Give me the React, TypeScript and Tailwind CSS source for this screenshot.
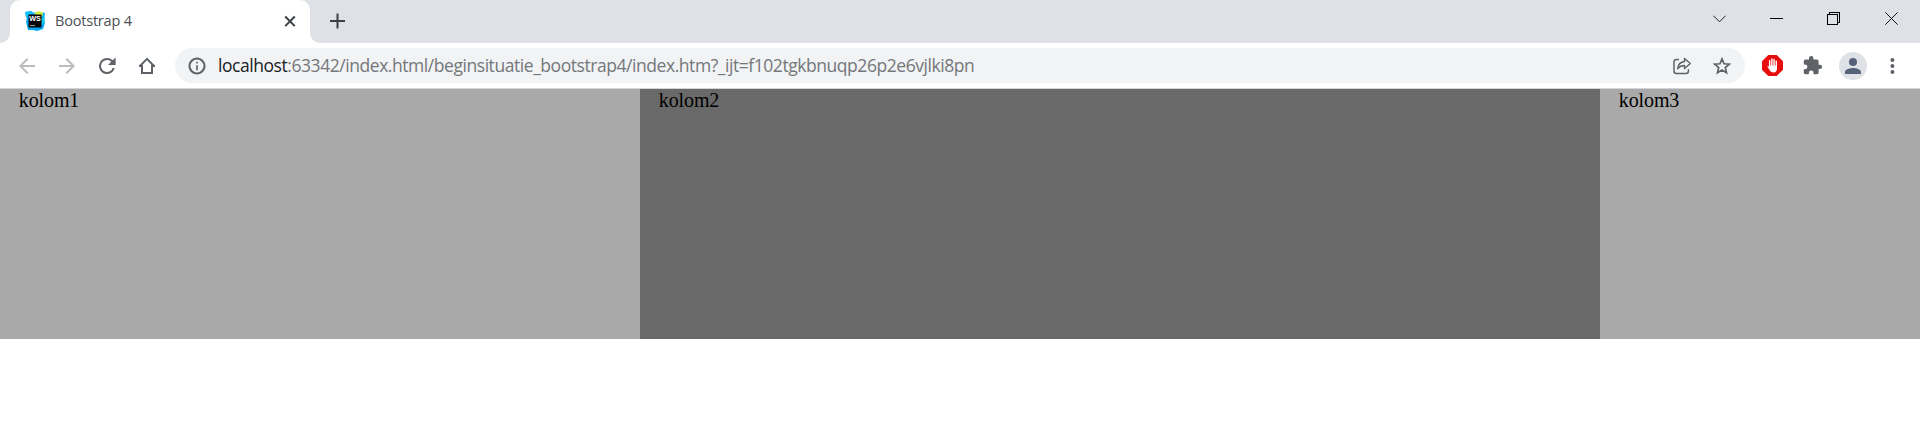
import type { ReactNode } from "react";

function ToolButton({ label, children }: { label: string; children: ReactNode }) {
  return (
    <button aria-label={label} className="flex h-[35px] w-10 shrink-0 items-center justify-center text-[#5f6368]">
      {children}
    </button>
  );
}

function Icon({ d, className = "size-6" }: { d: string; className?: string }) {
  return (
    <svg viewBox="0 0 24 24" className={className} fill="currentColor">
      <path d={d} />
    </svg>
  );
}

function WebStormIcon() {
  return (
    <svg viewBox="0 0 20 20" className="size-5 shrink-0">
      <path d="M0 1 6 0l3 2 3-1 8 1-1 6 1 4-2 6-6 2-4-1-5 0-2-8 1-5z" fill="#07a8f5" />
      <path d="M0 1 6 0l3 2-5 2-3 3z" fill="#12c2f7" />
      <path d="m9 3 4-3 4 1 1 3-2 2z" fill="#d6ef3b" />
      <path d="M17 6l3 0-1 6-2 2z" fill="#14c9e8" />
      <rect x="3.5" y="3.500" width="13" height="13" fill="#080808" />
      <text x="10.100" y="10.300" textAnchor="middle" textLength="11.500" lengthAdjust="spacingAndGlyphs" fontFamily="Liberation Sans, sans-serif" fontWeight="700" fontSize="7.500" fill="#fff">
        WS
      </text>
      <path d="M5 14.500h5" stroke="#999" strokeWidth="1" />
    </svg>
  );
}

function TabStrip() {
  return (
    <header className="flex h-[43px] bg-[#dee1e6]">
      <div className="flex w-2.5 items-end bg-white">
        <div className="h-full w-full rounded-br-[10px] bg-[#dee1e6]" />
      </div>
      <div className="w-[300px] bg-[#dee1e6]">
        <div className="flex h-full items-center rounded-t-[10px] bg-white pr-[13px] pb-[1px] pl-[15px]">
          <WebStormIcon />
          <span className="ml-[10px] grow font-['Open_Sans',sans-serif] text-[14.5px] tracking-[-0.2px] text-[#4b4f53]">
            Bootstrap 4
          </span>
          <svg viewBox="0 0 14 14" className="size-[14px]" stroke="#3c4043" strokeWidth="2">
            <path d="m2.2 2.5 9.6 9.6M11.8 2.5l-9.6 9.6" />
          </svg>
        </div>
      </div>
      <div className="w-2.5 bg-white">
        <div className="h-full w-full rounded-bl-[10px] bg-[#dee1e6]" />
      </div>
      <button aria-label="New tab" className="ml-[9px] flex h-[42px] w-4 items-center">
        <svg viewBox="0 0 16 16" className="size-4" stroke="#3c4043" strokeWidth="2">
          <path d="M1 8h15M8.5.5v15" />
        </svg>
      </button>
      <div className="grow" />
      <div className="mr-px flex h-[37px]">
        <div className="flex w-[57px] items-center justify-center">
          <svg viewBox="0 0 13 8" className="h-2 w-[13px]" fill="none" stroke="#222">
            <path d="m.4.7 6.1 6.1L12.6.7" />
          </svg>
        </div>
        <div className="flex w-[57px] items-center justify-center">
          <div className="h-px w-[13px] bg-black" />
        </div>
        <div className="flex w-[57px] items-center justify-center">
          <svg viewBox="0 0 13 13" className="size-[13px]" fill="none" stroke="#000" shapeRendering="crispEdges">
            <path d="M.5 2.5h10v10H.5zM2.5 2.5v-2h10v10h-2" />
          </svg>
        </div>
        <div className="flex w-[57px] items-center justify-center pl-[2px]">
          <svg viewBox="0 0 13 13" className="size-[13px]" stroke="#111">
            <path d="m.3.3 12.4 12.4M12.7.3.3 12.7" />
          </svg>
        </div>
      </div>
    </header>
  );
}

function AddressBar() {
  return (
    <div className="ml-2 flex h-[35px] grow items-center rounded-full bg-[#f1f3f4] pr-[3px] pl-[10px] text-[#5f6368]">
      <Icon className="size-6 p-[2px]" d="M11 17h2v-6h-2zm0-8h2V7h-2zm1-7.200C6.400 1.800 1.800 6.400 1.800 12S6.400 22.200 12 22.200 22.200 17.600 22.200 12 17.600 1.800 12 1.800zM12 19.800A7.800 7.800 0 1 1 12 4.200a7.800 7.800 0 0 1 0 15.600z" />
      <span className="ml-[9px] grow font-['Open_Sans',sans-serif] text-[17.5px] leading-[35px] tracking-[-0.445px] whitespace-nowrap text-[#74777b]">
        <span className="text-[#202124]">localhost</span>
        :63342/index.html/beginsituatie_bootstrap4/index.htm?_ijt=f102tgkbnuqp26p2e6vjlki8pn
      </span>
      <ToolButton label="Share">
        <svg viewBox="0 0 20 20" className="size-5" fill="none" stroke="currentColor" strokeWidth="1.5" strokeLinejoin="round">
          <path d="M7 3.500H4.200A2.200 2.200 0 0 0 2 5.700v9.600a2.200 2.200 0 0 0 2.200 2.200h10a2.200 2.200 0 0 0 2.200-2.200v-2" />
          <path d="M12.500 2.500 18.300 7.500l-5.800 5v-3c-3.300 0-5 .9-6.800 3.100C6.100 8.600 8.300 6 12.500 5.500z" />
        </svg>
      </ToolButton>
      <ToolButton label="Bookmark">
        <svg viewBox="0 0 20 20" className="size-5" fill="none" stroke="currentColor" strokeWidth="1.700">
          <path d="m10 2.900 2.050 4.850 5.250.45-3.980 3.450 1.200 5.120L10 14.050l-4.520 2.720 1.200-5.120L2.700 8.200l5.250-.45z" />
        </svg>
      </ToolButton>
    </div>
  );
}

function BlockerIcon() {
  return (
    <svg viewBox="0 0 20 20" className="size-[21px]">
      <path d="M6 0h8l6 6v8l-6 6H6l-6-6V6z" fill="#e80d0d" />
      <path d="M7.300 5.500v5M9.400 3.900v7M11.500 4.300v7M13.600 6v6" stroke="#fff" strokeWidth="1.400" strokeLinecap="round" />
      <path d="M6.600 10h7.700v2.700c0 2.300-1.100 4-3.200 4-2 0-3-.8-3.900-2.400L5.200 11c.5-.7 1-.4 1.400.1z" fill="#fff" />
    </svg>
  );
}

function Toolbar() {
  return (
    <nav className="flex h-[46px] items-start border-b border-[#d2d4d7] bg-white pt-[5px] pr-2 pl-[7px]">
      <ToolButton label="Back">
        <Icon className="size-6 text-[#babcbe]" d="M20 11H7.830l5.590-5.590L12 4l-8 8 8 8 1.410-1.410L7.830 13H20z" />
      </ToolButton>
      <ToolButton label="Forward">
        <Icon className="size-6 text-[#babcbe]" d="m12 4-1.410 1.410L16.170 11H4v2h12.170l-5.580 5.590L12 20l8-8z" />
      </ToolButton>
      <ToolButton label="Reload">
        <Icon className="size-6" d="M17.650 6.350A7.960 7.960 0 0 0 12 4a8 8 0 1 0 7.730 10h-2.080A6 6 0 1 1 12 6c1.660 0 3.140.69 4.220 1.780L13 11h7.600V3.400z" />
      </ToolButton>
      <ToolButton label="Home">
        <svg viewBox="0 0 24 24" className="size-6" fill="none" stroke="currentColor" strokeWidth="2">
          <path d="m4.500 12.500 7.500-7.600 7.500 7.600M4 12h3v7h10v-7h3" />
        </svg>
      </ToolButton>
      <AddressBar />
      <div className="ml-[7px] flex">
        <ToolButton label="Content blocker">
          <BlockerIcon />
        </ToolButton>
        <ToolButton label="Extensions">
          <Icon className="size-[21px]" d="M20.500 11H19V7a2 2 0 0 0-2-2h-4V3.500a2.500 2.500 0 0 0-5 0V5H4a2 2 0 0 0-1.990 2v3.800H3.500a2.700 2.700 0 0 1 0 5.400H2V20a2 2 0 0 0 2 2h3.800v-1.500a2.700 2.700 0 0 1 5.400 0V22H17a2 2 0 0 0 2-2v-4h1.500a2.500 2.500 0 0 0 0-5z" />
        </ToolButton>
        <ToolButton label="Profile">
          <span className="ml-[2px] flex size-7 shrink-0 items-center justify-center rounded-full bg-[#dee1e6] text-[#56617a]">
            <Icon className="size-6" d="M12 12a4 4 0 1 0 0-8 4 4 0 0 0 0 8zm0 2c-2.670 0-8 1.340-8 4v2h16v-2c0-2.660-5.330-4-8-4z" />
          </span>
        </ToolButton>
        <ToolButton label="Menu">
          <Icon className="size-6" d="M12.400 8a2 2 0 1 0 0-4 2 2 0 0 0 0 4zm0 2a2 2 0 1 0 0 4 2 2 0 0 0 0-4zm0 6a2 2 0 1 0 0 4 2 2 0 0 0 0-4z" />
        </ToolButton>
      </div>
    </nav>
  );
}

export default function App() {
  return (
    <div className="h-[432px] w-[1920px] overflow-hidden bg-white">
      <TabStrip />
      <Toolbar />
      <main className="grid h-[250px] grid-cols-12 font-['Liberation_Serif',serif] text-[20px] leading-[22px] tracking-[-0.1px] text-black">
        <section className="col-span-4 bg-[#a9a9a9] px-[18.75px]">kolom1</section>
        <section className="col-span-6 bg-[#696969] px-[18.75px]">kolom2</section>
        <section className="col-span-2 bg-[#a9a9a9] px-[18.75px]">kolom3</section>
      </main>
    </div>
  );
}
